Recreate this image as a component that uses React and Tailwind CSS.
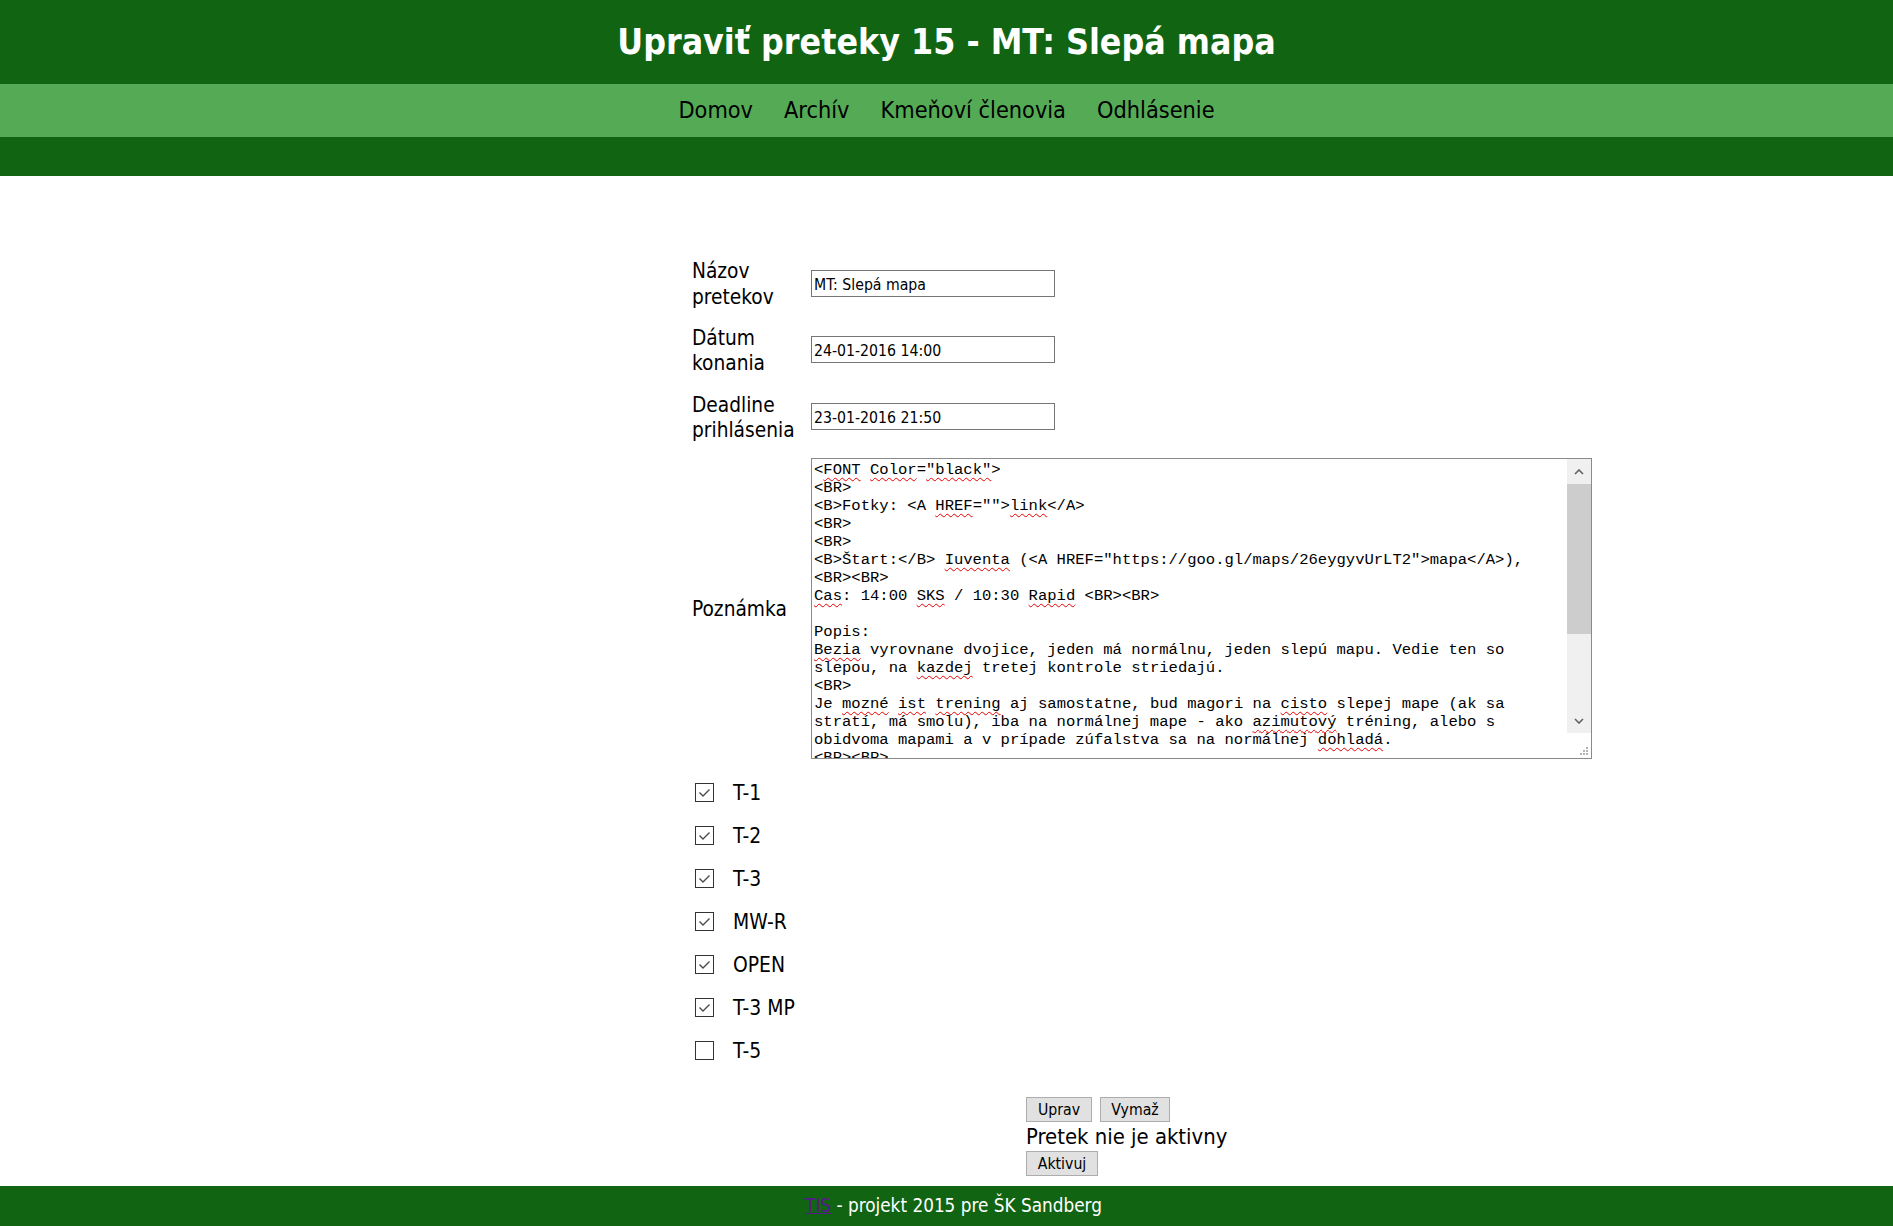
import React from "react";

const sq = (t) => ({ t, s: true });

const lines = [
  ["<", sq("FONT"), " ", sq("Color"), "=", sq('"black"'), ">"],
  ["<BR>"],
  ["<B>Fotky: <A ", sq("HREF"), '="">', sq("link"), "</A>"],
  ["<BR>"],
  ["<BR>"],
  ["<B>Štart:</B> ", sq("Iuventa"), ' (<A HREF="https://goo.gl/maps/26eygyvUrLT2">mapa</A>),'],
  ["<BR><BR>"],
  [sq("Cas"), ": 14:00 ", sq("SKS"), " / 10:30 ", sq("Rapid"), " <BR><BR>"],
  [""],
  ["Popis:"],
  [sq("Bezia"), " vyrovnane dvojice, jeden má normálnu, jeden slepú mapu. Vedie ten so"],
  ["slepou, na ", sq("kazdej"), " tretej kontrole striedajú."],
  ["<BR>"],
  ["Je ", sq("mozné"), " ", sq("ist"), " ", sq("trening"), " aj samostatne, bud magori na ", sq("cisto"), " slepej mape (ak sa"],
  ["stratí, má smolu), iba na normálnej mape - ako ", sq("azimutový"), " tréning, alebo s"],
  ["obidvoma mapami a v prípade zúfalstva sa na normálnej ", sq("dohladá"), "."],
  ["<BR><BR>"],
];

const categories = [
  { name: "T-1", checked: true },
  { name: "T-2", checked: true },
  { name: "T-3", checked: true },
  { name: "MW-R", checked: true },
  { name: "OPEN", checked: true },
  { name: "T-3 MP", checked: true },
  { name: "T-5", checked: false },
];

function Checkbox({ checked }) {
  return (
    <span className="w-[19px] h-[19px] border border-[#333333] bg-white flex items-center justify-center">
      {checked && (
        <svg viewBox="0 0 17 17" className="w-[17px] h-[17px]">
          <path d="M3.5 8.5 L7 12 L13.5 5.5" stroke="#4a4a4a" strokeWidth="1.4" fill="none" />
        </svg>
      )}
    </span>
  );
}

function Chevron({ up }) {
  return (
    <svg viewBox="0 0 10 6" className="w-[10px] h-[6px]">
      <path d={up ? "M1 5 L5 1 L9 5" : "M1 1 L5 5 L9 1"} stroke="#606060" strokeWidth="1.6" fill="none" />
    </svg>
  );
}

function FakeTextarea() {
  return (
    <div className="w-[781px] h-[301px] border border-[#8a8a8a] flex bg-white">
      <div className="flex-1 overflow-hidden pl-[2px] pt-[2px] font-['Liberation_Mono','Courier_New',monospace] text-[15.55px] leading-[18px] text-black">
        {lines.map((ln, i) => (
          <div key={i} className="h-[18px] whitespace-pre">
            {ln.map((seg, j) =>
              typeof seg === "string" ? (
                <span key={j}>{seg}</span>
              ) : (
                <span key={j} className="underline decoration-wavy decoration-[#e60000] decoration-1 underline-offset-[3px]">
                  {seg.t}
                </span>
              )
            )}
          </div>
        ))}
      </div>
      <div className="w-[24px] flex flex-col bg-[#f0f0f0]">
        <div className="h-[25px] flex items-center justify-center">
          <Chevron up />
        </div>
        <div className="h-[150px] bg-[#cdcdcd]" />
        <div className="flex-1" />
        <div className="h-[25px] flex items-center justify-center">
          <Chevron />
        </div>
        <div className="h-[25px] bg-white flex items-end justify-end pr-[2px] pb-[2px]">
          <svg viewBox="0 0 10 10" className="w-[10px] h-[10px]">
            <rect x="7" y="1" width="2" height="2" fill="#b5b5b5" />
            <rect x="4" y="4" width="2" height="2" fill="#b5b5b5" />
            <rect x="7" y="4" width="2" height="2" fill="#b5b5b5" />
            <rect x="1" y="7" width="2" height="2" fill="#b5b5b5" />
            <rect x="4" y="7" width="2" height="2" fill="#b5b5b5" />
            <rect x="7" y="7" width="2" height="2" fill="#b5b5b5" />
          </svg>
        </div>
      </div>
    </div>
  );
}

function TextInput({ value }) {
  return (
    <div className="w-[244px] h-[27px] border border-[#767676] bg-white flex items-center pl-[2px] pt-[3px] text-[15.7px] text-black whitespace-nowrap overflow-hidden">
      {value}
    </div>
  );
}

function Btn({ children, w }) {
  return (
    <button className={`h-[25px] ${w} bg-[#e1e1e1] border border-[#adadad] text-[15.7px] leading-none text-black flex items-center justify-center pt-[1px]`}>
      {children}
    </button>
  );
}

export default function App() {
  return (
    <div className="min-h-[1226px] flex flex-col bg-white font-['DejaVu_Sans_Condensed','DejaVu_Sans',sans-serif] text-black">
      <header>
        <div className="h-[84px] bg-[#106412] flex items-center justify-center">
          <h1 className="text-[35.4px] font-bold text-white leading-none">Upraviť preteky 15 - MT: Slepá mapa</h1>
        </div>
        <nav className="h-[53px] bg-[#55aa55] flex items-center justify-center gap-[31px] text-[23.3px]">
          <a>Domov</a>
          <a>Archív</a>
          <a>Kmeňoví členovia</a>
          <a>Odhlásenie</a>
        </nav>
        <div className="h-[39px] bg-[#106412]" />
      </header>

      <main className="flex-1 pt-[74px] pl-[692px]">
        <div className="flex flex-col text-[20.7px] leading-[25.5px]">
          <div className="h-[66px] flex items-center">
            <div className="w-[119px] pt-[3px]">Názov<br />pretekov</div>
            <TextInput value="MT: Slepá mapa" />
          </div>
          <div className="h-[67px] flex items-center">
            <div className="w-[119px] pt-[3px]">Dátum<br />konania</div>
            <TextInput value="24-01-2016 14:00" />
          </div>
          <div className="h-[67px] flex items-center">
            <div className="w-[119px] pt-[3px]">Deadline<br />prihlásenia</div>
            <TextInput value="23-01-2016 21:50" />
          </div>
          <div className="pt-[8px] pb-[7px] flex items-center">
            <div className="w-[119px] pt-[3px]">Poznámka</div>
            <FakeTextarea />
          </div>
        </div>

        <div className="pt-[5px] flex flex-col text-[20.9px]">
          {categories.map((c) => (
            <label key={c.name} className="h-[43px] flex items-center pl-[3px] gap-[19px]">
              <Checkbox checked={c.checked} />
              <span className="pt-[2px]">{c.name}</span>
            </label>
          ))}
        </div>

        <div className="pl-[334px] pt-[25px] flex flex-col items-start">
          <div className="flex gap-[8px]">
            <Btn w="w-[66px]">Uprav</Btn>
            <Btn w="w-[70px]">Vymaž</Btn>
          </div>
          <div className="text-[21.9px] leading-[29px]">Pretek nie je aktivny</div>
          <Btn w="w-[72px]">Aktivuj</Btn>
        </div>
      </main>

      <footer className="h-[40px] bg-[#106412] flex items-center justify-center pl-[14px] text-white text-[18.8px]">
        <a className="text-[#551a8b] underline">TIS</a>
        <span className="whitespace-pre"> - projekt 2015 pre ŠK Sandberg</span>
      </footer>
    </div>
  );
}
